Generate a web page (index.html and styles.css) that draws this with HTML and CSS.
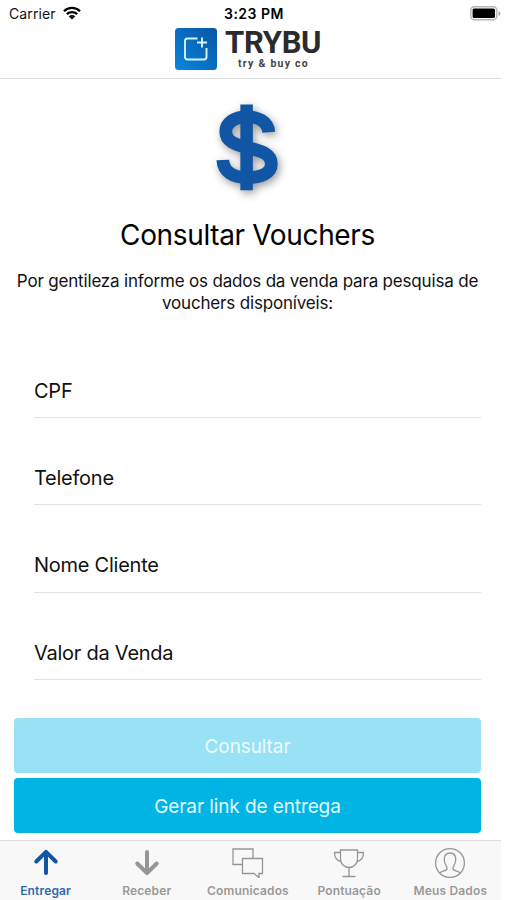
FILE: index.html
```
<!DOCTYPE html>
<html lang="pt-BR">
<head>
    <meta charset="UTF-8">
    <meta name="viewport" content="width=device-width, initial-scale=1.0">
    <title>Consultar Vouchers</title>
    <link rel="stylesheet" href="styles.css">
</head>
<body>
    <div class="screen">
        <header class="header">
            <div class="status">
                <div class="carrier">
                    <span>Carrier</span>
                    <svg width="18" height="14" viewBox="0 0 18 14">
                        <path d="M1 5.2a11.4 11.4 0 0 1 16 0M3.8 8.2a7.5 7.5 0 0 1 10.4 0" fill="none" stroke="#000" stroke-width="2.3"/>
                        <path d="M9 13.6 5.8 10.4a4.6 4.6 0 0 1 6.4 0z"/>
                    </svg>
                </div>
                <span class="time">3:23 PM</span>
                <svg class="battery" width="31" height="15" viewBox="0 0 31 15">
                    <rect x="0.8" y="0.8" width="26" height="13" rx="3.5" fill="#fff" stroke="#b5b5b5" stroke-width="1.4"/>
                    <rect x="2.6" y="2.6" width="22.4" height="9.4" rx="1.5"/>
                    <path d="M28.5 5c2.6.8 2.6 4 0 4.8z" fill="#aaa"/>
                </svg>
            </div>
            <div class="brand">
                <svg width="42" height="42" viewBox="0 0 42 42">
                    <defs>
                        <linearGradient id="logo" x1="0" y1="1" x2="1" y2="0">
                            <stop offset="0" stop-color="#0a86dc"/>
                            <stop offset="1" stop-color="#0755a6"/>
                        </linearGradient>
                    </defs>
                    <rect width="42" height="42" rx="3.5" fill="url(#logo)"/>
                    <path d="M22.500 10.5H12.5a2.500 2.500 0 0 0-2.500 2.500V29a2.500 2.500 0 0 0 2.500 2.500H29a2.500 2.500 0 0 0 2.500-2.500V20" fill="none" stroke="#d9f2ff" stroke-width="1.9"/>
                    <path d="M27 9.500v10M22 14.500h10" stroke="#d9f2ff" stroke-width="1.9"/>
                </svg>
                <div class="brand-text">
                    <strong class="brand-name">TRYBU</strong>
                    <span class="brand-sub">try &amp; buy co</span>
                </div>
            </div>
        </header>

        <main class="content">
            <svg class="dollar" width="90" height="100" viewBox="204 100 90 100">
                <g fill="none" stroke="#1156a5">
                    <path d="M269.800 132.300C269 121.500 259 116.800 248 116.800C235 116.800 226.800 123 226.800 131.500C226.800 141.500 236 144.500 248 147.500C263 151 272.300 154 272.300 164C272.300 173.500 262 177.500 248 177.500C234 177.500 224.500 172 223.800 160" stroke-width="12.800"/>
                    <path d="M247.6 104.5v85.8" stroke-width="12.5"/>
                </g>
            </svg>
            <h1>Consultar Vouchers</h1>
            <p class="intro">Por gentileza informe os dados da venda para pesquisa de<br>vouchers disponíveis:</p>

            <div class="form">
                <div class="field">CPF</div>
                <div class="field">Telefone</div>
                <div class="field">Nome Cliente</div>
                <div class="field">Valor da Venda</div>
            </div>

            <div class="buttons">
                <button class="btn disabled" type="button">Consultar</button>
                <button class="btn" type="button">Gerar link de entrega</button>
            </div>
        </main>

        <nav class="tabs">
            <div class="tab active">
                <svg width="32" height="32" viewBox="0 0 32 32">
                    <path d="M16 27V6M6.3 15.5 16 5.8l9.7 9.7" stroke-width="4" stroke-linecap="round" stroke-linejoin="round"/>
                </svg>
                <span>Entregar</span>
            </div>
            <div class="tab">
                <svg width="32" height="32" viewBox="0 0 32 32">
                    <path d="M16 6v21M6.3 17.5 16 27.2l9.7-9.7" stroke-width="4" stroke-linecap="round" stroke-linejoin="round"/>
                </svg>
                <span>Receber</span>
            </div>
            <div class="tab">
                <svg width="32" height="32" viewBox="0 0 32 32">
                    <path d="M10.5 18.500H1V3h20v9M10.500 12.500h20v15H27v4.200l-5-4.200H10.500z"/>
                </svg>
                <span>Comunicados</span>
            </div>
            <div class="tab">
                <svg width="32" height="32" viewBox="0 0 32 32">
                    <path d="M7.500 4h17v9a8.500 8.500 0 0 1-17 0zM7.500 6.500H1.500c0 5 2 8.500 7 9M24.500 6.500h6c0 5-2 8.500-7 9M16 21.500v9M9.500 30.500h13"/>
                </svg>
                <span>Pontuação</span>
            </div>
            <div class="tab">
                <svg width="32" height="32" viewBox="0 0 32 32">
                    <circle cx="16" cy="17" r="14.400"/>
                    <path d="M5.500 27c2-2 5.500-1.700 7-3.200 1.200-1.500.4-3-.5-4.300-1.500-2.200-2-4.300-1.700-7C10.600 9 12.700 7 16 7s5.400 2 5.700 5.500c.3 2.700-.2 4.800-1.700 7-.9 1.300-1.700 2.800-.5 4.300 1.500 1.500 5 1.200 7 3.200"/>
                </svg>
                <span>Meus Dados</span>
            </div>
        </nav>
    </div>
</body>
</html>
```
FILE: styles.css
```
*{
    margin: 0;
    padding: 0;
    box-sizing: border-box;
}

body{
    background-color: white;
    font-family: Inter, "Liberation Sans", sans-serif;
    color: #111;
}

.screen{
    width: 501px;
    height: 900px;
    display: flex;
    flex-direction: column;
    overflow: hidden;
}

.header{
    height: 79px;
    border-bottom: 1px solid #dcdcdc;
}

.status{
    display: grid;
    grid-template-columns: 215px auto 1fr;
    align-items: center;
    height: 27px;
    padding-left: 9px;
    font-size: 14px;
}

.carrier{
    display: flex;
    align-items: center;
    gap: 7px;
    letter-spacing: 0.1px;
}

.carrier svg{
    margin-bottom: 2px;
}

.time{
    font-weight: 600;
    letter-spacing: 0.5px;
    color: #000;
}

.battery{
    justify-self: end;
}

.brand{
    display: flex;
    gap: 8px;
    padding-left: 175px;
}

.brand svg{
    margin-top: 1px;
}

.brand-text{
    display: flex;
    flex-direction: column;
}

.brand-name{
    font-family: Roboto, sans-serif;
    font-size: 31px;
    line-height: 31px;
    letter-spacing: -0.3px;
    color: #2b2b2e;
}

.brand-sub{
    font-family: Roboto, sans-serif;
    font-size: 10.5px;
    font-weight: 700;
    line-height: 12px;
    letter-spacing: 1.25px;
    padding-left: 13px;
    color: #444;
}

.content{
    flex: 1;
    display: flex;
    flex-direction: column;
    align-items: center;
    padding: 21px 20px 0 14px;
}

.dollar{
    filter: drop-shadow(2px 3px 4px rgba(0, 0, 0, 0.4));
}

h1{
    margin-top: 17px;
    font-size: 28px;
    font-weight: 400;
    line-height: 36px;
    letter-spacing: -0.35px;
    color: #000;
}

.intro{
    margin-top: 17px;
    font-size: 17px;
    line-height: 22px;
    letter-spacing: -0.18px;
    text-align: center;
    white-space: nowrap;
}

.form{
    width: 447px;
    margin-left: 20px;
    margin-top: 17px;
}

.field{
    height: 87.2px;
    padding-top: 47px;
    border-bottom: 1px solid #e2e2e2;
    font-size: 20px;
    line-height: 26px;
    letter-spacing: -0.25px;
}

.buttons{
    width: 467px;
    display: flex;
    flex-direction: column;
    gap: 5px;
    margin-top: 38px;
}

.btn{
    height: 55px;
    padding-top: 2px;
    border: none;
    border-radius: 4px;
    background-color: #00b4e4;
    color: #e0faff;
    font-family: inherit;
    font-size: 19px;
    letter-spacing: -0.1px;
}

.btn.disabled{
    background-color: #99e1f5;
    color: #ecfbff;
}

.tabs{
    height: 60px;
    display: grid;
    grid-template-columns: repeat(5, 101.2px);
    margin-left: -5px;
    width: 506px;
    padding-top: 5px;
    background-color: #f8f8f8;
    border-top: 1px solid #dedede;
}

.tab{
    display: flex;
    flex-direction: column;
    align-items: center;
    color: #999;
    font-size: 12px;
    font-weight: 600;
    line-height: 16px;
    letter-spacing: 0.15px;
}

.tab svg{
    fill: none;
    stroke: #969696;
    stroke-width: 1.3;
}

.tab span{
    margin-top: 5px;
}

.tab.active{
    color: #3268ad;
}

.tab.active svg{
    stroke: #1156a5;
}
```
